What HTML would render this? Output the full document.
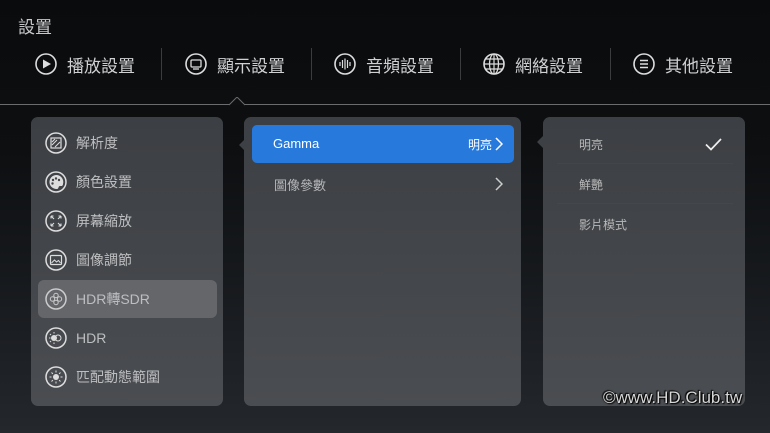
<!DOCTYPE html>
<html><head><meta charset="utf-8"><style>
*{margin:0;padding:0;box-sizing:border-box}
body{width:770px;height:433px;overflow:hidden;position:relative;font-family:"Liberation Sans","Noto Sans CJK TC",sans-serif;background:linear-gradient(#0a0b0d 0%,#0d0f11 35%,#1a1d21 75%,#24282d 100%);color:#cfd0d2}
.a{position:absolute}
.title{left:18px;top:13px;font-size:17px;color:#c8c9cb}
.tab{top:52px;font-size:17px;color:#d0d1d3;display:flex;align-items:center;gap:10px;height:24px}
.sep{top:48px;width:1px;height:32px;background:#3a3c40}
.line{left:0;top:104px;width:770px;height:1px;background:#6a6c70}
.panel{border-radius:7px;background:linear-gradient(#3c3f43,#4a4d51)}
.item{left:7px;width:179px;height:38px;display:flex;align-items:center;font-size:14px;color:#bdbec0;border-radius:6px}
.item svg{margin-left:7px;margin-right:9px}
.wm{left:603px;top:388px;font-size:17px;color:#d8d8d8;text-shadow:0 0 2px #000,1px 1px 1px #000,-1px -1px 1px #000}
</style></head><body>
<div class="a title">設置</div>
<div class="a tab" style="left:35px"><svg width="22" height="22" viewBox="0 0 22 22"><circle cx="11" cy="11" r="10" fill="none" stroke="#ddd" stroke-width="1.6"/><path d="M8 6.5L16 11L8 15.5Z" fill="#ddd"/></svg>播放設置</div>
<div class="a sep" style="left:161px"></div>
<div class="a tab" style="left:185px"><svg width="22" height="22" viewBox="0 0 22 22"><circle cx="11" cy="11" r="10" fill="none" stroke="#ddd" stroke-width="1.6"/><rect x="6" y="7" width="10" height="7" rx="1" fill="none" stroke="#ddd" stroke-width="1.3"/><path d="M8 16h6" stroke="#ddd" stroke-width="1.3"/></svg>顯示設置</div>
<div class="a sep" style="left:311px"></div>
<div class="a tab" style="left:334px"><svg width="22" height="22" viewBox="0 0 22 22"><circle cx="11" cy="11" r="10" fill="none" stroke="#ddd" stroke-width="1.6"/><path d="M6 9v4M8.5 7v8M11 5.5v11M13.5 7v8M16 9v4" stroke="#ddd" stroke-width="1.2"/></svg>音頻設置</div>
<div class="a sep" style="left:460px"></div>
<div class="a tab" style="left:483px"><svg width="22" height="22" viewBox="0 0 22 22"><circle cx="11" cy="11" r="10" fill="none" stroke="#ddd" stroke-width="1.6"/><ellipse cx="11" cy="11" rx="4.5" ry="10" fill="none" stroke="#ddd" stroke-width="1.2"/><path d="M11 1v20M1 11h20M2.5 6h17M2.5 16h17" stroke="#ddd" stroke-width="1.2"/></svg>網絡設置</div>
<div class="a sep" style="left:610px"></div>
<div class="a tab" style="left:633px"><svg width="22" height="22" viewBox="0 0 22 22"><circle cx="11" cy="11" r="10" fill="none" stroke="#ddd" stroke-width="1.6"/><path d="M7 7.5h8M7 11h8M7 14.5h8" stroke="#ddd" stroke-width="1.6"/></svg>其他設置</div>
<div class="a line"></div>
<svg class="a" style="left:229px;top:97px" width="16" height="9"><path d="M0 8L8 0L16 8" fill="#0d0f11" stroke="#6a6c70"/></svg>

<div class="a panel" style="left:31px;top:117px;width:192px;height:289px">
 <div class="a item" style="top:7px"><svg width="22" height="22" viewBox="0 0 22 22"><circle cx="11" cy="11" r="10" fill="none" stroke="#ddd" stroke-width="1.5"/><rect x="6" y="6" width="10" height="10" fill="none" stroke="#ddd" stroke-width="1.2"/><path d="M7 13l5-5M7 10l3-3M10 15l5-5" stroke="#ddd"/></svg>解析度</div>
 <div class="a item" style="top:46px"><svg width="22" height="22" viewBox="0 0 22 22"><circle cx="11" cy="11" r="10" fill="none" stroke="#ddd" stroke-width="1.5"/><path d="M11 4a7 7 0 1 0 1 14c2 0 1-3 3-3h2a2 2 0 0 0 1-2A7 7 0 0 0 11 4z" fill="#ddd"/><circle cx="8" cy="9" r="1.2" fill="#444"/><circle cx="11" cy="7.5" r="1.2" fill="#444"/><circle cx="14" cy="9" r="1.2" fill="#444"/><circle cx="7.5" cy="12.5" r="1.2" fill="#444"/></svg>顏色設置</div>
 <div class="a item" style="top:85px"><svg width="22" height="22" viewBox="0 0 22 22"><circle cx="11" cy="11" r="10" fill="none" stroke="#ddd" stroke-width="1.5"/><path d="M6 6l3 3M6 6h2.5M6 6v2.5M16 6l-3 3M16 6h-2.5M16 6v2.5M6 16l3-3M6 16h2.5M6 16v-2.5M16 16l-3-3M16 16h-2.5M16 16v-2.5" stroke="#ddd" stroke-width="1.1"/></svg>屏幕縮放</div>
 <div class="a item" style="top:124px"><svg width="22" height="22" viewBox="0 0 22 22"><circle cx="11" cy="11" r="10" fill="none" stroke="#ddd" stroke-width="1.5"/><rect x="5.5" y="6.5" width="11" height="9" rx="1" fill="none" stroke="#ddd" stroke-width="1.2"/><path d="M6.5 14l3-3 2 2 2-1.5 2 2.5" fill="none" stroke="#ddd"/></svg>圖像調節</div>
 <div class="a item" style="top:163px;background:#64666a"><svg width="22" height="22" viewBox="0 0 22 22"><circle cx="11" cy="11" r="10" fill="none" stroke="#ccc" stroke-width="1.5"/><g fill="none" stroke="#ccc"><circle cx="11" cy="7.5" r="2.2"/><circle cx="11" cy="14.5" r="2.2"/><circle cx="7.5" cy="11" r="2.2"/><circle cx="14.5" cy="11" r="2.2"/></g></svg>HDR轉SDR</div>
 <div class="a item" style="top:202px"><svg width="22" height="22" viewBox="0 0 22 22"><circle cx="11" cy="11" r="10" fill="none" stroke="#ddd" stroke-width="1.5"/><circle cx="9" cy="11" r="3" fill="#ddd"/><rect x="10" y="8" width="6" height="6" rx="3" fill="none" stroke="#ddd"/><path d="M9 5v1.5M5 7l1 1M4 11h1.5M5 15l1-1M9 17v-1.5" stroke="#ddd"/></svg>HDR</div>
 <div class="a item" style="top:241px"><svg width="22" height="22" viewBox="0 0 22 22"><circle cx="11" cy="11" r="10" fill="none" stroke="#ddd" stroke-width="1.5"/><circle cx="11" cy="11" r="3" fill="#ddd"/><path d="M11 4.5v2M11 15.5v2M4.5 11h2M15.5 11h2M6.5 6.5l1.4 1.4M14.1 14.1l1.4 1.4M6.5 15.5l1.4-1.4M14.1 7.9l1.4-1.4" stroke="#ddd"/></svg>匹配動態範圍</div>
</div>

<div class="a panel" style="left:244px;top:117px;width:277px;height:289px">
 <div class="a" style="left:8px;top:8px;width:262px;height:38px;background:#2779dc;border-radius:5px;color:#fff;font-size:13px">
  <span class="a" style="left:21px;top:11px">Gamma</span>
  <span class="a" style="left:216px;top:11px;font-size:12px">明亮</span>
  <svg class="a" style="left:243px;top:12px" width="8" height="14"><path d="M1 1l6 6-6 6" fill="none" stroke="#fff" stroke-width="1.5"/></svg>
 </div>
 <span class="a" style="left:30px;top:58px;font-size:13px;color:#b5b6b8">圖像參數</span>
 <svg class="a" style="left:251px;top:60px" width="8" height="14"><path d="M1 1l6 6-6 6" fill="none" stroke="#ccc" stroke-width="1.5"/></svg>
</div>
<svg class="a" style="left:239px;top:139px" width="6" height="12"><path d="M6 0L0 6L6 12Z" fill="#3d4044"/></svg>

<div class="a panel" style="left:543px;top:117px;width:202px;height:289px">
 <span class="a" style="left:36px;top:19px;font-size:12px;color:#b8b8b8">明亮</span>
 <svg class="a" style="left:162px;top:21px" width="17" height="13"><path d="M1 6.5l5 5L16 1" fill="none" stroke="#eee" stroke-width="1.7"/></svg>
 <div class="a" style="left:14px;top:46px;width:176px;height:1px;background:#424549"></div>
 <span class="a" style="left:36px;top:59px;font-size:12px;color:#b8b8b8">鮮艷</span>
 <div class="a" style="left:14px;top:86px;width:176px;height:1px;background:#44474b"></div>
 <span class="a" style="left:36px;top:99px;font-size:12px;color:#b8b8b8">影片模式</span>
</div>
<svg class="a" style="left:537px;top:136px" width="6" height="12"><path d="M6 0L0 6L6 12Z" fill="#3d4044"/></svg>

<div class="a wm">©www.HD.Club.tw</div>
</body></html>
